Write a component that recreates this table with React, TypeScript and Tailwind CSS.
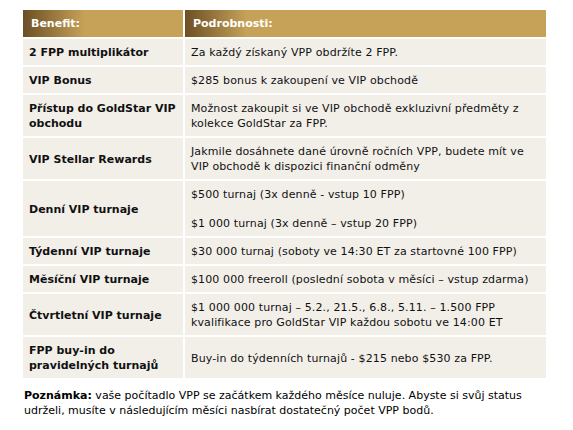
import React from "react";

type Row = { benefit: React.ReactNode; detail: React.ReactNode };

const rows: Row[] = [
  { benefit: "2 FPP multiplikátor", detail: "Za každý získaný VPP obdržíte 2 FPP." },
  { benefit: "VIP Bonus", detail: "$285 bonus k zakoupení ve VIP obchodě" },
  {
    benefit: (
      <>
        Přístup do GoldStar VIP
        <br />
        obchodu
      </>
    ),
    detail: (
      <>
        Možnost zakoupit si ve VIP obchodě exkluzivní předměty z
        <br />
        kolekce GoldStar za FPP.
      </>
    ),
  },
  {
    benefit: "VIP Stellar Rewards",
    detail: (
      <>
        Jakmile dosáhnete dané úrovně ročních VPP, budete mít ve
        <br />
        VIP obchodě k dispozici finanční odměny
      </>
    ),
  },
  {
    benefit: "Denní VIP turnaje",
    detail: (
      <div className="flex flex-col gap-[14px]">
        <p>$500 turnaj (3x denně - vstup 10 FPP)</p>
        <p>$1 000 turnaj (3x denně – vstup 20 FPP)</p>
      </div>
    ),
  },
  { benefit: "Týdenní VIP turnaje", detail: "$30 000 turnaj (soboty ve 14:30 ET za startovné 100 FPP)" },
  { benefit: "Měsíční VIP turnaje", detail: "$100 000 freeroll (poslední sobota v měsíci – vstup zdarma)" },
  {
    benefit: "Čtvrtletní VIP turnaje",
    detail: (
      <>
        $1 000 000 turnaj – 5.2., 21.5., 6.8., 5.11. – 1.500 FPP
        <br />
        kvalifikace pro GoldStar VIP každou sobotu ve 14:00 ET
      </>
    ),
  },
  {
    benefit: (
      <>
        FPP buy-in do
        <br />
        pravidelných turnajů
      </>
    ),
    detail: "Buy-in do týdenních turnajů - $215 nebo $530 za FPP.",
  },
];

const headerCell =
  "h-[27px] flex items-center px-[8px] font-bold text-white bg-[linear-gradient(to_right,#6c4f24,#c6a259_62px,#c6a259)]";
const cell = "flex items-center bg-[#f2efe9] pl-[6px] pr-[6px] pt-[6px] pb-[5px]";

export default function App() {
  return (
    <div
      className="w-[573px] h-[430px] bg-white text-[11px] leading-[15px] text-[#111]"
      style={{ fontFamily: 'Verdana, "DejaVu Sans", sans-serif' }}
    >
      <div className="pt-[10px] pl-[23px] w-[546px]">
        <div className="grid grid-cols-[160px_361px] gap-x-[2px] gap-y-[2px] bg-white">
          <div className={headerCell}>Benefit:</div>
          <div className={headerCell}>Podrobnosti:</div>
          {rows.map((r, i) => (
            <React.Fragment key={i}>
              <div className={cell + " font-bold whitespace-nowrap"}>{r.benefit}</div>
              <div className={cell + " tracking-[0.12px]"}>{r.detail}</div>
            </React.Fragment>
          ))}
        </div>
        <p className="mt-[10px] pl-[1px] text-black">
          <span className="font-bold">Poznámka:</span> vaše počítadlo VPP se začátkem každého měsíce nuluje. Abyste si svůj status
          <br />
          udrželi, musíte v následujícím měsíci nasbírat dostatečný počet VPP bodů.
        </p>
      </div>
    </div>
  );
}
